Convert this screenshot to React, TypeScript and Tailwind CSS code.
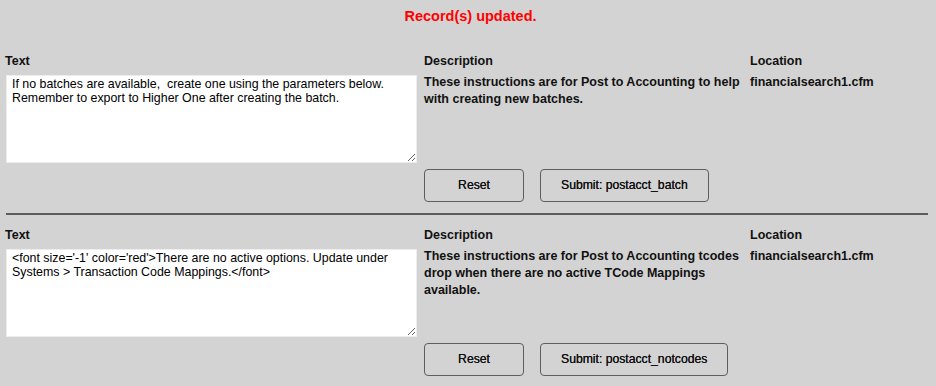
const records = [
  {
    text: 'If no batches are available,  create one using the parameters below. Remember to export to Higher One after creating the batch.',
    description: 'These instructions are for Post to Accounting to help with creating new batches.',
    location: 'financialsearch1.cfm',
    submit: 'Submit: postacct_batch',
  },
  {
    text: "<font size='-1' color='red'>There are no active options. Update under Systems > Transaction Code Mappings.</font>",
    description: 'These instructions are for Post to Accounting tcodes drop when there are no active TCode Mappings available.',
    location: 'financialsearch1.cfm',
    submit: 'Submit: postacct_notcodes',
  },
];

const gothic = { fontFamily: '"Liberation Sans", Arial, sans-serif' };

function RecordForm({ record }: { record: (typeof records)[number] }) {
  return (
    <form
      className="grid grid-cols-[419px_326px_1fr] text-[12.5px] font-bold leading-[17px] text-[#111]"
      onSubmit={e => e.preventDefault()}
    >
      {/* Labels */}
      <div className="pb-[5px]">Text</div>
      <div className="pb-[5px]">Description</div>
      <div className="pb-[5px]">Location</div>

      {/* Fields */}
      <div className="pl-px">
        <textarea
          defaultValue={record.text}
          className="block w-[411px] h-[88px] bg-white border border-[#ededed] px-[5px] py-[2px] text-[12.4px] font-normal leading-[13.5px] text-black outline-none resize"
          style={{ fontFamily: '"Liberation Sans", Arial, sans-serif' }}
        />
      </div>
      <div className="pr-2 -mt-px">{record.description}</div>
      <div className="-mt-px">{record.location}</div>

      {/* Buttons */}
      <div />
      <div className="col-span-2 flex gap-4 pt-[6px]">
        <button
          type="reset"
          className="w-[100px] h-[33px] border border-[#5e5e5e] rounded-[4px] bg-[#d3d3d3] text-[12.2px] font-normal text-[#111] cursor-pointer [text-shadow:0_0_0.4px_#111]"
        >
          Reset
        </button>
        <button
          type="submit"
          className="h-[33px] px-5 border border-[#5e5e5e] rounded-[4px] bg-[#d3d3d3] text-[12.2px] font-normal text-[#111] cursor-pointer [text-shadow:0_0_0.4px_#111]"
        >
          {record.submit}
        </button>
      </div>
    </form>
  );
}

export default function App() {
  return (
    <div className="w-[936px] h-[386px] bg-[#d3d3d3] pl-[5px] overflow-hidden" style={gothic}>
      <p className="pt-[8px] h-[53px] text-center text-[14.5px] font-bold leading-[17px] text-[#ff0000]">
        Record(s) updated.
      </p>

      <RecordForm record={records[0]} />

      <hr className="mt-[11px] mb-[12px] ml-px w-[922px] border-0 border-t-2 border-[#5c5c5c]" />

      <RecordForm record={records[1]} />
    </div>
  );
}
